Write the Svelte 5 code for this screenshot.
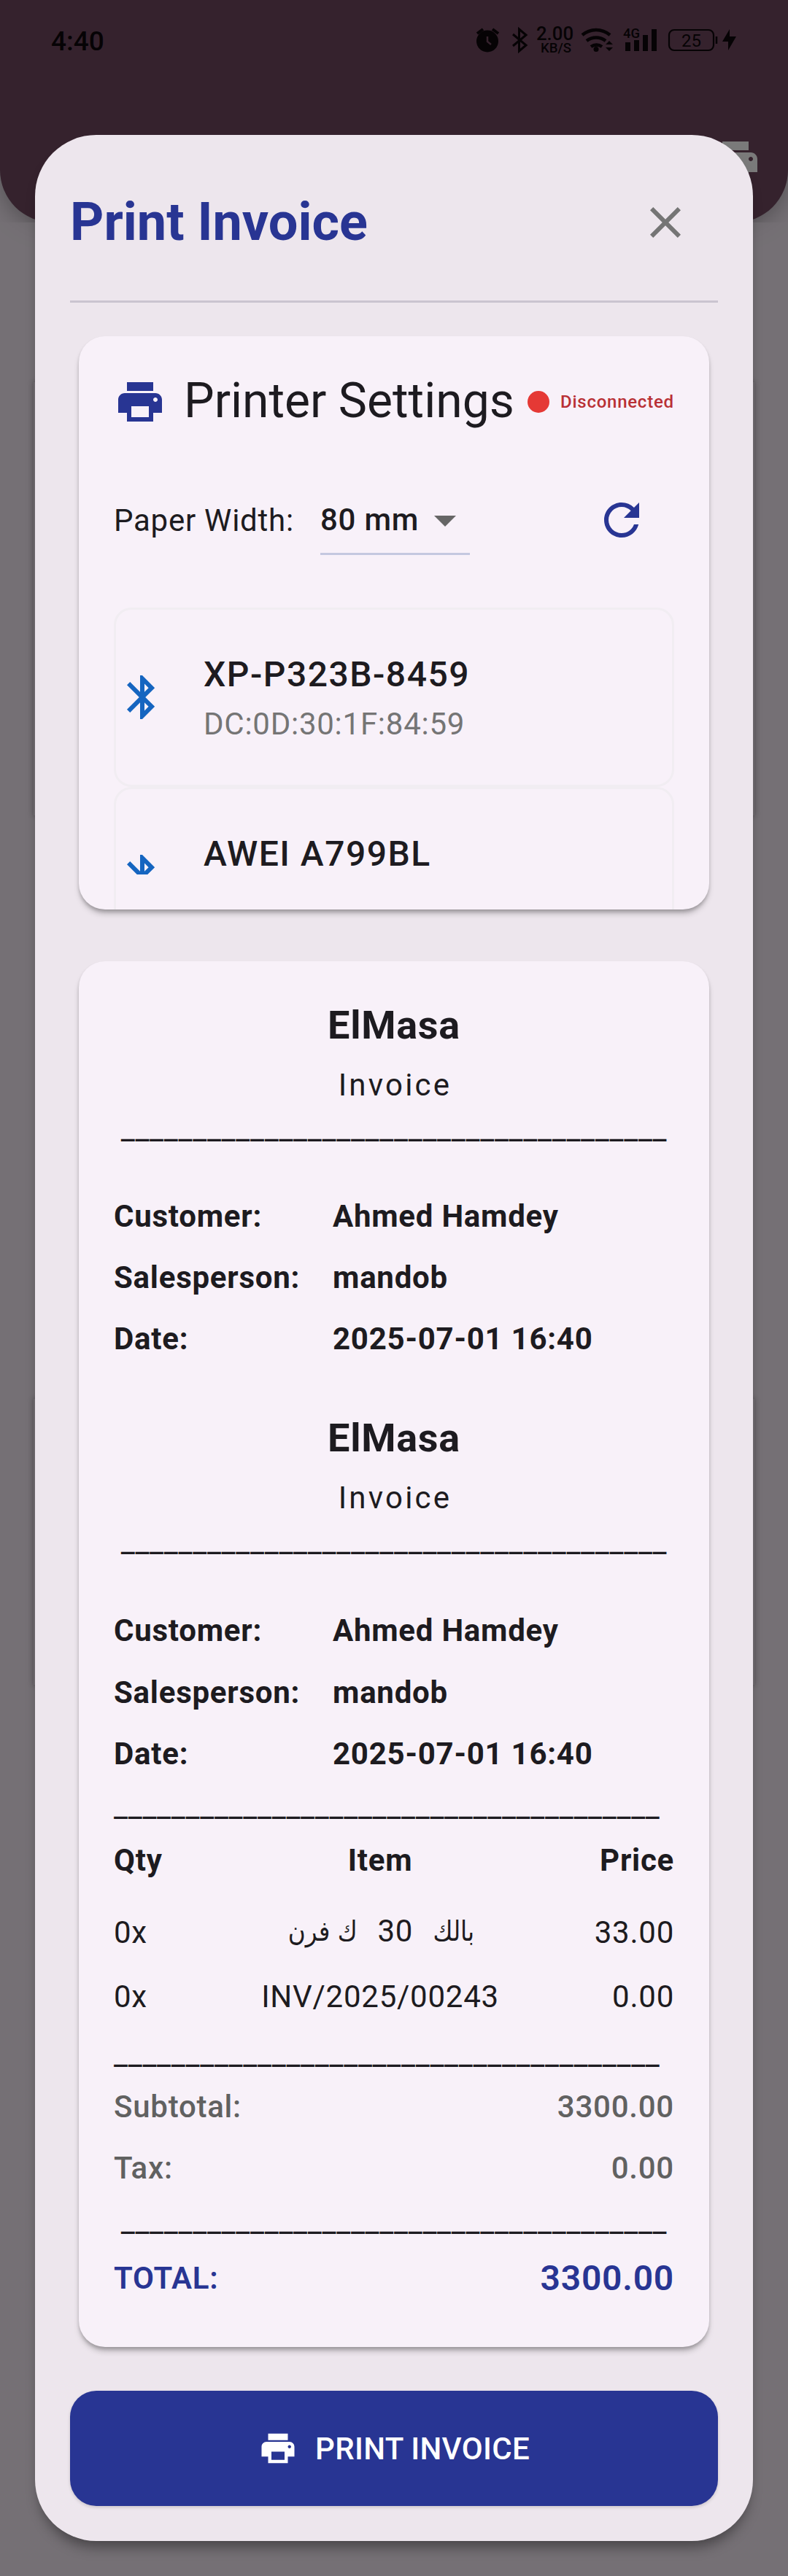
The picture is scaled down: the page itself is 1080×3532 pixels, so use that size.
<script>
  const dashes = '_'.repeat(38);
  const devices = [
    { name: 'XP-P323B-8459', mac: 'DC:0D:30:1F:84:59' },
    { name: 'AWEI A799BL', mac: '' }
  ];
  const info = [
    ['Customer:', 'Ahmed Hamdey'],
    ['Salesperson:', 'mandob'],
    ['Date:', '2025-07-01 16:40']
  ];
  const btPath =
    'M17.71 7.71 12 2h-1v7.59L6.41 5 5 6.41 10.59 12 5 17.59 6.41 19 11 14.41V22h1l5.71-5.71-4.3-4.29 4.3-4.29zM13 5.83l1.88 1.88L13 9.59V5.83zm1.88 10.46L13 18.17v-3.76l1.88 1.88z';
  const printPath =
    'M19 8H5c-1.66 0-3 1.34-3 3v6h4v4h12v-4h4v-6c0-1.66-1.34-3-3-3zm-3 11H8v-5h8v5zm3-7c-.55 0-1-.45-1-1s.45-1 1-1 1 .45 1 1-.45 1-1 1zm-1-9H6v4h12V3z';
</script>

{#snippet receiptHead()}
  <div class="store">ElMasa</div>
  <div class="doc">Invoice</div>
  <div class="rule centered head">{dashes}</div>
{/snippet}

{#snippet infoRows()}
  {#each info as [label, value]}
    <div class="info"><span>{label}</span><span>{value}</span></div>
  {/each}
{/snippet}

<div class="screen">
  <header class="appbar">
    <svg class="bar-print" viewBox="0 0 24 24"><path d={printPath} /></svg>
  </header>
  <div class="seam"></div>
  <div class="behind upper"></div>
  <div class="behind lower"></div>

  <div class="status">
    <span class="clock">4:40</span>
    <svg class="icons" viewBox="0 0 370 50">
      <g fill="none" stroke="#060305" stroke-width="4">
        <path d="M4 13 12 7M25 7l8 6" />
        <path d="M53 14l18 15-9.500 8V7l9.500 8-18 15" stroke-width="3" />
        <path d="M148 15a29 29 0 0 1 38 0M154 23a21 21 0 0 1 26 0M160 31a13 13 0 0 1 15 0" stroke-width="4.500" />
        <rect x="267" y="8" width="61" height="28" rx="7" stroke-width="2.200" />
        <path d="M332 17v10" stroke-width="2.500" />
      </g>
      <g fill="#060305">
        <circle cx="18" cy="23.500" r="15" />
        <circle cx="167" cy="34.500" r="3.500" />
        <path d="M180 28h10l-5-5zM180 32h10l-5 5zM207 25h7v12h-7zM219 22h7v15h-7zM231 15h7v22h-7zM243 7h7v30h-7zM350 7l-10 17h8v12l11-19h-9z" />
      </g>
      <path d="M18 17v7l5 4" fill="none" stroke="#35222d" stroke-width="2.500" />
      <g fill="#060305" class="tiny">
        <text x="85" y="22" font-size="25" font-weight="500" textLength="51" lengthAdjust="spacingAndGlyphs">2.00</text>
        <text x="91" y="39" font-size="18.500" font-weight="500" textLength="42" lengthAdjust="spacingAndGlyphs">KB/S</text>
        <text x="204" y="19" font-size="19" font-weight="500" textLength="23" lengthAdjust="spacingAndGlyphs">4G</text>
        <text x="284" y="30.500" font-size="24" textLength="27">25</text>
      </g>
    </svg>
  </div>

  <main class="dialog">
    <div class="title-row">
      <h1>Print Invoice</h1>
      <span class="close">
        <svg viewBox="0 0 24 24"><path d="M19 6.410 17.590 5 12 10.590 6.410 5 5 6.410 10.590 12 5 17.590 6.410 19 12 13.410 17.590 19 19 17.590 13.410 12z" /></svg>
      </span>
    </div>
    <div class="divider"></div>

    <section class="card settings">
      <div class="settings-head">
        <svg viewBox="0 0 24 24"><path d={printPath} /></svg>
        <h2>Printer Settings</h2>
        <span class="dot"></span>
        <span class="state">Disconnected</span>
      </div>
      <div class="paper">
        <span class="paper-label">Paper Width:</span>
        <div class="select">
          <span>80 mm</span>
          <svg viewBox="0 0 24 24"><path d="M7 10l5 5 5-5z" /></svg>
        </div>
        <svg class="refresh" viewBox="0 0 24 24"><path d="M17.650 6.350A7.958 7.958 0 0 0 12 4c-4.420 0-7.990 3.580-7.990 8s3.570 8 7.990 8c3.730 0 6.840-2.550 7.730-6h-2.080A5.990 5.990 0 0 1 12 18c-3.310 0-6-2.690-6-6s2.690-6 6-6c1.660 0 3.140.690 4.220 1.780L13 11h7V4l-2.350 2.350z" /></svg>
      </div>
      <div class="devices">
        {#each devices as d}
          <div class="device">
            <span class="bt"><svg viewBox="0 0 24 24"><path d={btPath} /></svg></span>
            <div class="device-text">
              <div class="name">{d.name}</div>
              <div class="mac">{d.mac}</div>
            </div>
          </div>
        {/each}
      </div>
    </section>

    <section class="card receipt">
      {@render receiptHead()}
      <div class="block first">{@render infoRows()}</div>
      {@render receiptHead()}
      <div class="block second">{@render infoRows()}</div>
      <div class="rule">{dashes}</div>
      <div class="item th"><span>Qty</span><span>Item</span><span>Price</span></div>
      <div class="item tall"><span>0x</span><span class="ar" dir="rtl"><span class="word">بالك</span><span class="num">30</span><span class="word">ك فرن</span></span><span>33.00</span></div>
      <div class="item short"><span>0x</span><span>INV/2025/00243</span><span>0.00</span></div>
      <div class="rule after-items">{dashes}</div>
      <div class="sum"><span>Subtotal:</span><span>3300.00</span></div>
      <div class="sum tax"><span>Tax:</span><span>0.00</span></div>
      <div class="rule centered">{dashes}</div>
      <div class="total"><span>TOTAL:</span><span class="amount">3300.00</span></div>
    </section>

    <div class="print">
      <svg viewBox="0 0 24 24"><path d={printPath} /></svg>
      <span>PRINT INVOICE</span>
    </div>
  </main>
</div>

<style>
  :global(body) { margin: 0; background: #757075; }
  .screen {
    position: relative;
    box-sizing: border-box;
    width: 1080px;
    height: 3532px;
    padding: 185px 48px 48px;
    background: #757075;
    font-family: Roboto, 'Liberation Sans', sans-serif;
    font-size: 42px;
    letter-spacing: 0.75px;
    color: #1d1b20;
    white-space: nowrap;
    overflow: hidden;
  }
  svg { display: block; fill: currentColor; flex: none; }
  .appbar {
    position: absolute;
    inset: 0 0 auto;
    height: 305px;
    background: #35222d;
    border-radius: 0 0 72px 72px;
    box-shadow: 0 8px 30px rgba(0, 0, 0, 0.28);
  }
  .bar-print { position: absolute; left: 972px; top: 185px; width: 72px; height: 72px; color: #7a7a7a; }
  .seam { position: absolute; left: 0; right: 0; top: 305px; height: 60px; background: rgba(117, 112, 117, 0.65); }
  /* Edges of the list cards that lie dimmed behind the dialog */
  .behind { position: absolute; left: 46px; right: 46px; box-shadow: 0 0 6px 1px rgba(40, 35, 40, 0.3); }
  .upper { top: 524px; height: 594px; }
  .lower { top: 1918px; height: 392px; }
  .status {
    position: absolute;
    left: 70px;
    right: 60px;
    top: 33px;
    height: 50px;
    display: flex;
    justify-content: space-between;
    color: #060305;
  }
  .clock { font-size: 37px; line-height: 47px; font-weight: 500; letter-spacing: 0; }
  .icons { width: 370px; height: 50px; }
  .tiny { letter-spacing: 0; }

  .dialog {
    position: relative;
    box-sizing: border-box;
    height: 3299px;
    padding: 48px;
    border-radius: 84px;
    background: #ede6ed;
    box-shadow: 0 14px 18px -6px rgba(0, 0, 0, 0.4);
  }
  .title-row { display: flex; align-items: center; justify-content: space-between; height: 144px; }
  h1 { margin: 0; font-size: 72px; line-height: 142px; font-weight: 700; letter-spacing: 0; color: #283593; }
  .close { display: grid; place-items: center; width: 144px; height: 144px; color: #757575; }
  .close svg { width: 72px; height: 72px; }
  .divider { height: 3px; margin-top: 35px; background: #cac4d0; }

  .card {
    box-sizing: border-box;
    margin: 0 12px;
    padding: 48px;
    border-radius: 36px;
    background: #f8f1f9;
    box-shadow: 0 7px 8px -2px rgba(0, 0, 0, 0.26), 0 3px 4px rgba(0, 0, 0, 0.14);
    overflow: hidden;
  }
  .settings { height: 786px; margin-top: 46px; }
  .settings-head { display: flex; align-items: center; height: 84px; }
  .settings-head svg { width: 72px; height: 72px; color: #283593; }
  h2 { margin: -2px 0 0 24px; width: 471px; font-size: 66px; font-weight: 400; letter-spacing: 0; line-height: 84px; }
  .dot { width: 30px; height: 30px; border-radius: 50%; background: #e53935; }
  .state { margin-left: 15px; font-size: 24px; font-weight: 500; color: #b93035; }
  .paper { display: flex; align-items: center; height: 144px; margin-top: 48px; }
  .paper-label { width: 283px; }
  .select {
    display: flex;
    align-items: center;
    justify-content: space-between;
    box-sizing: border-box;
    width: 205px;
    height: 96px;
    padding: 2px 1px 0 0;
    border-bottom: 3px solid #c5c8e0;
    font-weight: 500;
  }
  .select svg { width: 72px; height: 72px; color: #666; }
  .refresh { width: 72px; height: 72px; margin-left: auto; margin-right: 36px; color: #283593; }
  .devices { margin-top: 48px; }
  .device {
    box-sizing: border-box;
    display: flex;
    align-items: center;
    height: 246px;
    border: 3px solid #f1edf2;
    border-radius: 24px;
  }
  .bt { width: 72px; height: 72px; margin-right: 48px; color: #1565c0; }
  .device:nth-child(2) .bt { height: 33px; margin-bottom: 39px; overflow: hidden; }
  .name { height: 73px; line-height: 69px; font-size: 48px; font-weight: 500; letter-spacing: 1.500px; }
  .mac { height: 60px; line-height: 60px; color: #757575; }

  .receipt { height: 1900px; margin-top: 71px; }
  .store { height: 79px; line-height: 79px; font-size: 54px; font-weight: 700; text-align: center; letter-spacing: 0.750px; }
  .doc { height: 84px; padding-left: 3px; line-height: 86px; text-align: center; letter-spacing: 3.200px; }
  .rule { height: 60px; line-height: 60px; }
  .centered { text-align: center; }
  .head { height: 38px; line-height: 38px; }
  .first { margin: 59px 0 54px; }
  .second { margin-top: 60px; }
  .info { display: flex; height: 84px; line-height: 84px; font-weight: 700; }
  .second .info { height: 84.500px; line-height: 85px; }
  .info span:first-child { width: 300px; }
  .item { display: grid; grid-template-columns: 153px 424px 191px; }
  .item > span:nth-child(2) { text-align: center; }
  .item > span:last-child { text-align: right; }
  .th { height: 87px; line-height: 87px; font-weight: 700; }
  .tall { height: 112px; line-height: 112px; }
  .short { height: 63px; line-height: 63px; }
  .ar { display: flex; justify-content: center; gap: 20px; line-height: 108px; }
  .word { font-family: 'DejaVu Sans', sans-serif; font-size: 38px; letter-spacing: 0; transform: scaleX(0.86); }
  .num { margin-right: 3px; }
  .after-items { margin-top: 18px; }
  .sum, .total { display: flex; justify-content: space-between; height: 83px; line-height: 83px; font-weight: 500; color: #616161; }
  .tax { height: 86px; line-height: 86px; }
  .total { height: 95px; line-height: 95px; font-weight: 600; color: #283593; }
  .amount { font-size: 48px; }

  .print {
    display: flex;
    align-items: center;
    justify-content: center;
    gap: 24px;
    height: 158px;
    margin-top: 60px;
    border-radius: 36px;
    background: #283593;
    color: #fff;
    font-weight: 500;
    letter-spacing: 0.300px;
    box-shadow: 0 2px 4px rgba(0, 0, 0, 0.15);
  }
  .print svg { width: 54px; height: 54px; }
</style>
